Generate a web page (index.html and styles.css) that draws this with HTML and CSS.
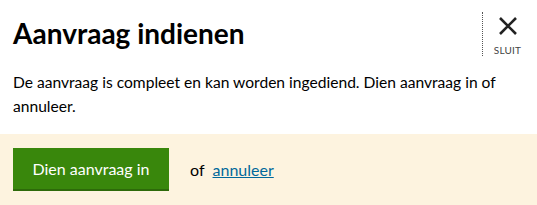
FILE: index.html
```html
<!DOCTYPE html>
<html lang="nl">
<head>
    <meta charset="UTF-8">
    <meta name="viewport" content="width=device-width, initial-scale=1.0">
    <title>Aanvraag indienen</title>
    <link rel="stylesheet" href="styles.css">
</head>
<body>
    <div class="dialog">
        <div class="dialog-header">
            <h1>Aanvraag indienen</h1>
            <button class="close-button" type="button">
                <svg width="20" height="18" viewBox="0 0 20 18" aria-hidden="true">
                    <path d="M2 1 L18 17 M18 1 L2 17" stroke="#222" stroke-width="2.6" fill="none"/>
                </svg>
                <span>SLUIT</span>
            </button>
        </div>
        <p class="dialog-text">De aanvraag is compleet en kan worden ingediend. Dien aanvraag in of annuleer.</p>
        <div class="dialog-footer">
            <button class="submit-button" type="button">Dien aanvraag in</button>
            <span class="or">of</span>
            <a href="#" class="cancel-link">annuleer</a>
        </div>
    </div>
</body>
</html>
```

FILE: styles.css
```css
body {
    margin: 0;
    padding: 0;
    font-family: Lato, "Noto Sans", sans-serif;
    color: #000;
    background-color: #fff;
}

.dialog {
    width: 537px;
}

.dialog-header {
    display: flex;
    justify-content: space-between;
    align-items: flex-start;
    padding: 12px 0 0 13px;
}

.dialog-header h1 {
    margin: 4px 0 0 0;
    font-size: 28px;
    font-weight: bold;
    line-height: 34px;
}

.close-button {
    display: flex;
    flex-direction: column;
    align-items: center;
    width: 50px;
    height: 44px;
    margin-right: 5px;
    padding: 5px 0 0 0;
    border: none;
    border-left: 1px dotted #555;
    background: none;
    font-family: inherit;
    cursor: pointer;
}

.close-button span {
    margin-top: 9px;
    font-size: 10px;
    color: #444;
    letter-spacing: 0.2px;
}

.dialog-text {
    margin: 14px 0 0 0;
    padding: 0 20px 0 13px;
    font-size: 15.6px;
    line-height: 24px;
}

.dialog-footer {
    display: flex;
    align-items: center;
    margin-top: 16px;
    padding: 14px 13px 15px 13px;
    background-color: #fdf3df;
}

.submit-button {
    width: 156px;
    height: 43px;
    border: none;
    border-bottom: 2px solid #2d6a0a;
    background-color: #39870c;
    color: #fff;
    font-family: inherit;
    font-size: 16px;
    cursor: pointer;
}

.or {
    margin-left: 21px;
    font-size: 16px;
}

.cancel-link {
    margin-left: 8px;
    font-size: 16px;
    color: #01689b;
}
```
